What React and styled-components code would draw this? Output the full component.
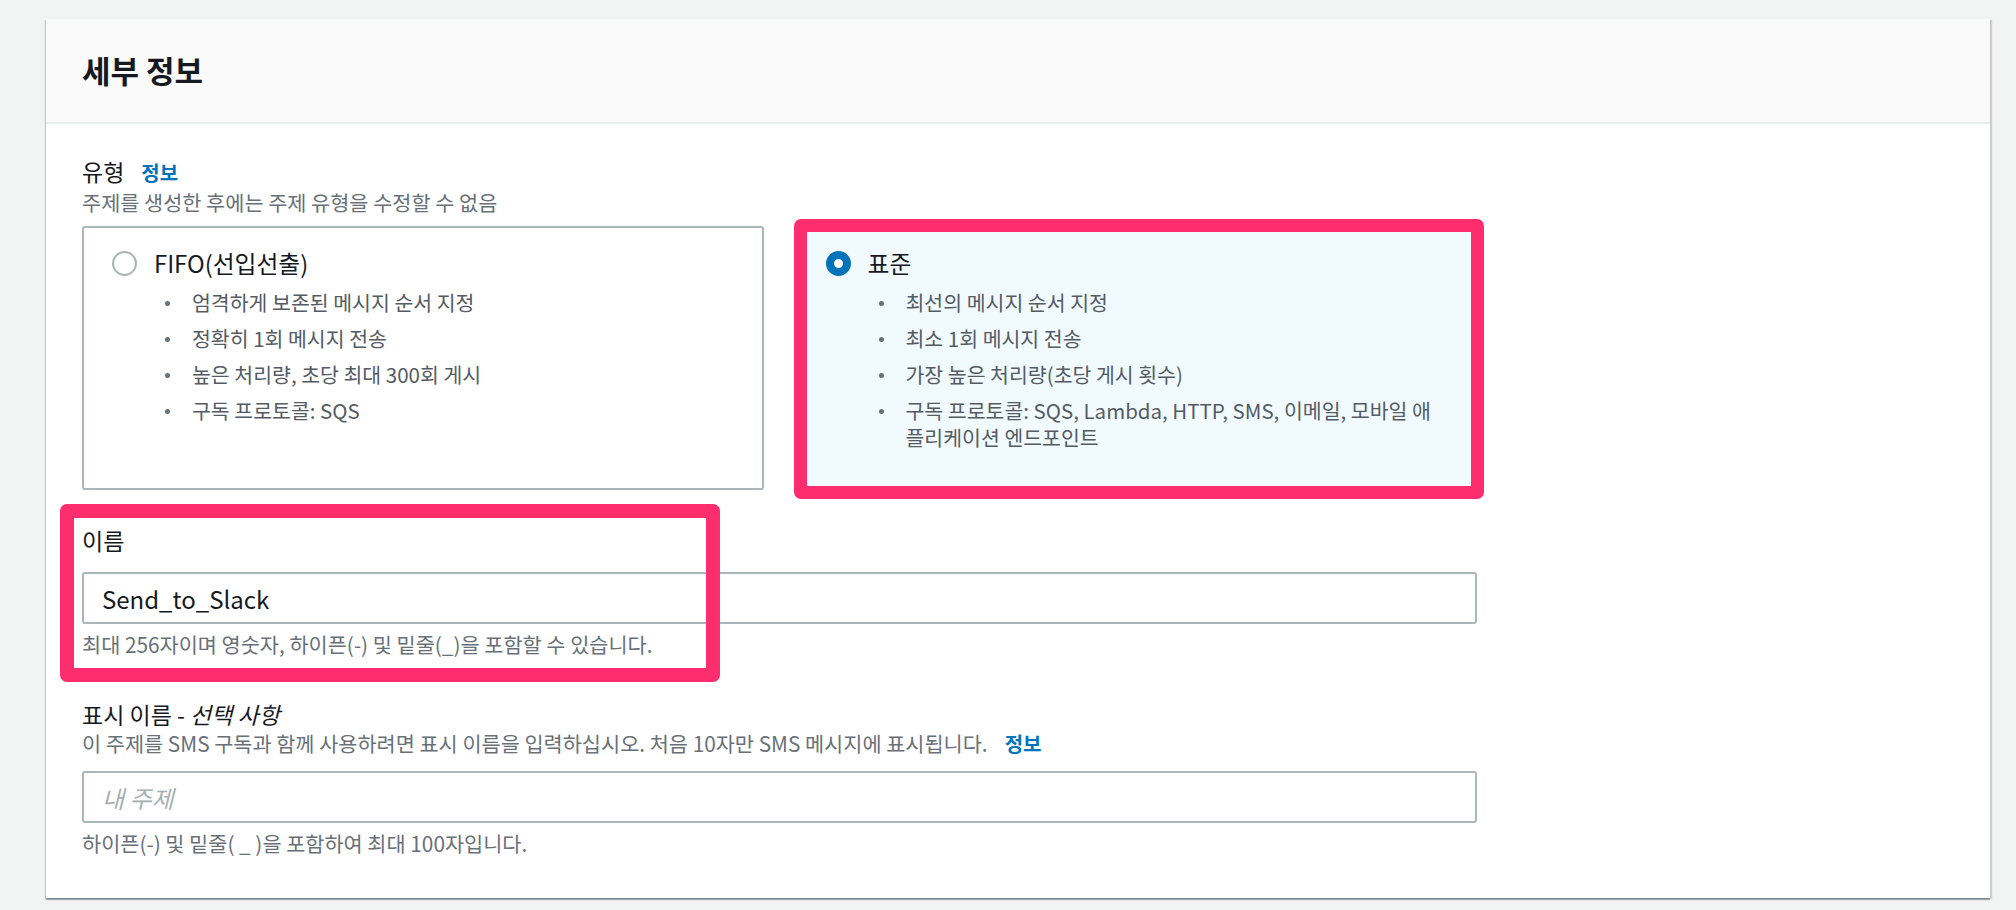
import React from "react";
import styled, { createGlobalStyle, css } from "styled-components";

const GlobalStyle = createGlobalStyle`
  html, body {
    margin: 0;
    padding: 0;
    background: #f2f3f3;
  }
  body {
    font-family: "Noto Sans CJK KR", "Noto Sans", sans-serif;
    color: #16191f;
  }
  *, *::before, *::after {
    box-sizing: border-box;
  }
`;

const highlight = css`
  &::after {
    content: "";
    position: absolute;
    border: 13px solid #fe2e6e;
    border-radius: 7px;
    pointer-events: none;
  }
`;

const Page = styled.div`
  width: 2016px;
  height: 910px;
  padding: 19px 26px 0 46px;
  overflow: hidden;
`;

const Container = styled.section`
  background: #fff;
  box-shadow: 0 2px 1px 0 rgba(0, 28, 36, 0.3),
    2px 1px 1px 0 rgba(0, 28, 36, 0.15), -1px 1px 1px 0 rgba(0, 28, 36, 0.15);
`;

const Header = styled.header`
  background: #fafafa;
  border-bottom: 2px solid #eaeded;
  padding: 33px 36px 34px;
`;

const Title = styled.h2`
  margin: 0;
  font-size: 31px;
  line-height: 36px;
  font-weight: 700;
  color: #16191f;
`;

const Body = styled.div`
  padding: 32px 36px 42px;
`;

const Form = styled.div`
  max-width: 1395px;
`;

const Field = styled.div`
  position: relative;
  margin-top: ${(p) => p.$gap || 0}px;
  ${(p) =>
    p.$highlight &&
    css`
      ${highlight}
      &::after {
        top: -21px;
        left: -22px;
        width: 660px;
        height: 178px;
        border-width: 14px;
      }
    `}
`;

const Label = styled.div`
  font-size: 23px;
  line-height: 30px;
  color: #16191f;

  em {
    font-style: italic;
  }
`;

const InfoLink = styled.a`
  margin-left: 17px;
  font-size: 20px;
  font-weight: 700;
  color: #0073bb;
  text-decoration: none;
`;

const Description = styled.div`
  font-size: 20.8px;
  line-height: 28px;
  color: #687078;
`;

const Hint = styled.div`
  margin-top: 7px;
  font-size: 20.8px;
  line-height: 26px;
  color: #687078;
`;

const Tiles = styled.div`
  display: grid;
  grid-template-columns: 1fr 1fr;
  column-gap: 32px;
  margin-top: 10px;
`;

const Tile = styled.div`
  position: relative;
  border: 2px solid ${(p) => (p.$checked ? "#0073bb" : "#aab7b8")};
  background: ${(p) => (p.$checked ? "#f1faff" : "#fff")};
  border-radius: 3px;
  padding: 20px 24px 37px 28px;
  ${(p) =>
    p.$highlight &&
    css`
      ${highlight}
      &::after {
        top: -9px;
        left: -4px;
        right: -9px;
        bottom: -11px;
      }
    `}
`;

const RadioRow = styled.div`
  display: flex;
  align-items: center;
  gap: 17px;
`;

const Radio = styled.span`
  flex: none;
  width: 25px;
  height: 25px;
  border-radius: 50%;
  background: #fff;
  border: ${(p) => (p.$checked ? "8px solid #0073bb" : "2px solid #aab7b8")};
`;

const TileTitle = styled.span`
  font-size: 23.8px;
  line-height: 30px;
  color: #16191f;
`;

const Bullets = styled.ul`
  list-style: none;
  margin: 11px 0 0;
  padding: 0 0 0 80px;
`;

const Bullet = styled.li`
  position: relative;
  font-size: 20.5px;
  line-height: 27px;
  color: #545b64;
  white-space: nowrap;

  & + & {
    margin-top: 9px;
  }

  &::before {
    content: "";
    position: absolute;
    left: -27px;
    top: 12px;
    width: 5px;
    height: 5px;
    border-radius: 50%;
    background: #687078;
  }
`;

const Input = styled.input`
  display: block;
  width: 100%;
  height: 52px;
  margin-top: ${(p) => p.$gap}px;
  padding: 0 18px;
  border: 2px solid #aab7b8;
  border-radius: 3px;
  background: #fff;
  font-family: inherit;
  font-size: 24px;
  color: #16191f;
  outline: none;

  &::placeholder {
    color: #a5b0b2;
    font-style: italic;
  }
`;

const tiles = [
  {
    key: "fifo",
    title: "FIFO(선입선출)",
    items: [
      "엄격하게 보존된 메시지 순서 지정",
      "정확히 1회 메시지 전송",
      "높은 처리량, 초당 최대 300회 게시",
      "구독 프로토콜: SQS",
    ],
  },
  {
    key: "standard",
    title: "표준",
    checked: true,
    items: [
      "최선의 메시지 순서 지정",
      "최소 1회 메시지 전송",
      "가장 높은 처리량(초당 게시 횟수)",
      <>
        구독 프로토콜: SQS, Lambda, HTTP, SMS, 이메일, 모바일 애
        <br />
        플리케이션 엔드포인트
      </>,
    ],
  },
];

export default function App() {
  return (
    <>
      <GlobalStyle />
      <Page>
        <Container>
          <Header>
            <Title>세부 정보</Title>
          </Header>
          <Body>
            <Form>
              <Field>
                <Label>
                  유형
                  <InfoLink href="#">정보</InfoLink>
                </Label>
                <Description>
                  주제를 생성한 후에는 주제 유형을 수정할 수 없음
                </Description>
                <Tiles>
                  {tiles.map((tile) => (
                    <Tile
                      key={tile.key}
                      $checked={tile.checked}
                      $highlight={tile.checked}
                    >
                      <RadioRow>
                        <Radio $checked={tile.checked} />
                        <TileTitle>{tile.title}</TileTitle>
                      </RadioRow>
                      <Bullets>
                        {tile.items.map((item, i) => (
                          <Bullet key={i}>{item}</Bullet>
                        ))}
                      </Bullets>
                    </Tile>
                  ))}
                </Tiles>
              </Field>

              <Field $gap={35} $highlight>
                <Label>이름</Label>
                <Input $gap={17} defaultValue="Send_to_Slack" />
                <Hint>
                  최대 256자이며 영숫자, 하이픈(-) 및 밑줄(_)을 포함할 수
                  있습니다.
                </Hint>
              </Field>

              <Field $gap={42}>
                <Label>
                  표시 이름 - <em>선택 사항</em>
                </Label>
                <Description>
                  이 주제를 SMS 구독과 함께 사용하려면 표시 이름을
                  입력하십시오. 처음 10자만 SMS 메시지에 표시됩니다.
                  <InfoLink href="#">정보</InfoLink>
                </Description>
                <Input $gap={13} placeholder="내 주제" />
                <Hint>하이픈(-) 및 밑줄( _ )을 포함하여 최대 100자입니다.</Hint>
              </Field>
            </Form>
          </Body>
        </Container>
      </Page>
    </>
  );
}
